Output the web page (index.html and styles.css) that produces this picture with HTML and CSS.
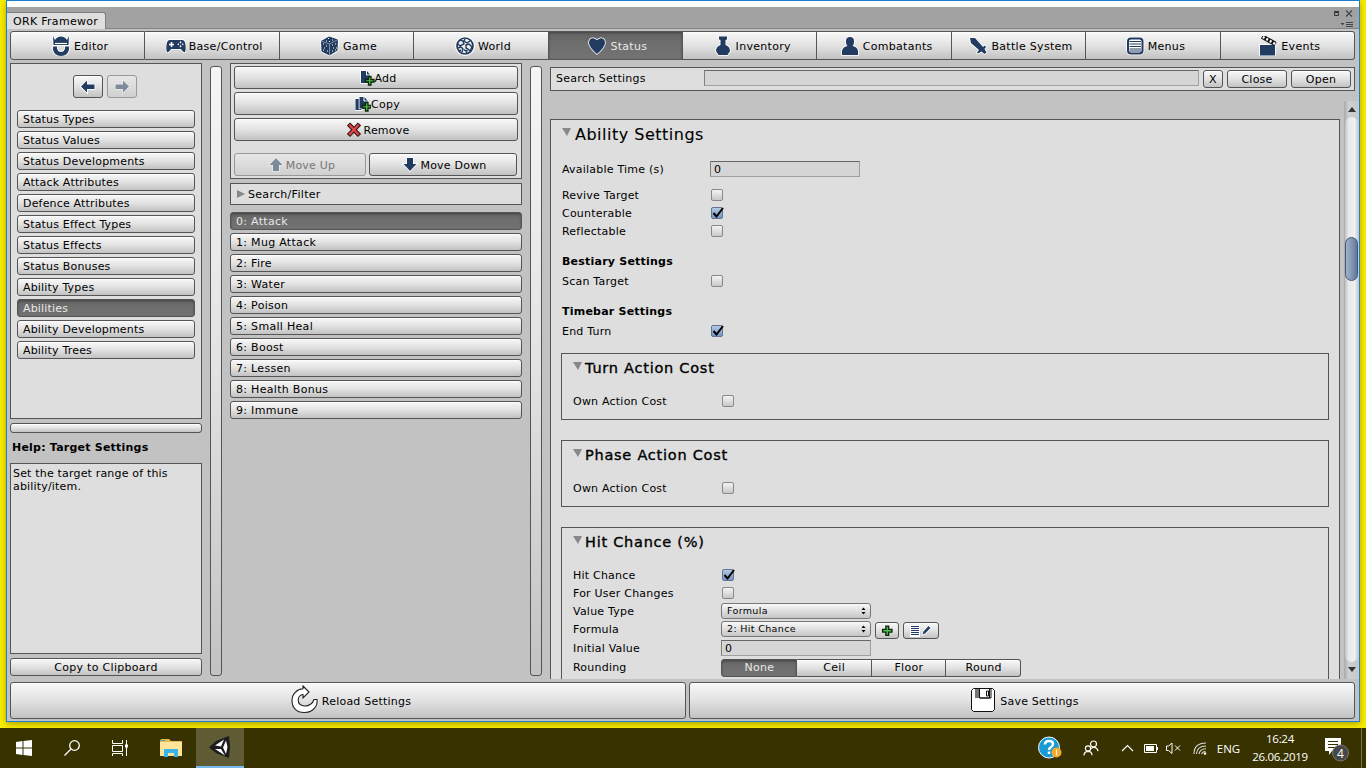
FILE: index.html
```html
<!DOCTYPE html>
<html lang="en">
  <head>
    <meta charset="utf-8">
    <title>ORK Framework</title>
    <link rel="stylesheet" href="styles.css">
  </head>
  <body>
    <div class="window">
      <div class="title-strip"></div>
      <div class="tab-bar">
        <div class="tab">ORK Framewor</div>
        <svg class="window-controls" width="24" height="21" viewBox="0 0 24 21">
          <path d="M4.500 5.500h4v3h-4z M4 4.500h5" fill="none" stroke="#333"/>
          <path d="M16 3.500l6 6M22 3.500l-6 6" stroke="#444" stroke-width="1.100"/>
          <path d="M10.500 16h4l-2 2.500z" fill="#444"/>
          <path d="M16 15.500h7M16 17.500h7M16 19.500h7" stroke="#444"/>
        </svg>
      </div>
      <div class="toolbar">
        <button><svg class="icon" viewBox="0 0 20 20"><path class="halo" d="M2 0l2 4q2-3.500 6-3.500T16 4l2-4-.5 9h-15zM2 10.500h4v2q1 3.500 4 3.500t4-3.500v-2h4v3q-1 6-8 6.500-7-.5-8-6.500z"/><path d="M4 7.500h12" stroke="#fff" stroke-width="1.200"/></svg>Editor</button>
        <button><svg class="icon" viewBox="0 0 20 20"><path class="halo" d="M4 4h12q3 0 3.500 5t-.5 7q-2 1-4-3H5q-2 4-4 3-1-2-.5-7T4 4z"/><path d="M5.500 6v5M3 8.500h5" stroke="#fff" stroke-width="1.500"/><path d="M14.500 5l1 1.200-1 1.200-1-1.200zM14.500 9l1 1.200-1 1.200-1-1.200zM12.300 7.200l1 1-1 1-1-1zM16.700 7.200l1 1-1 1-1-1z" fill="#fff"/></svg>Base/Control</button>
        <button><svg class="icon" viewBox="0 0 20 20"><path class="halo" d="M9 .5l9 3-.5 11-8 5-8-4L1 5z"/><path d="M1 5l8.500 3L18 3.500M9.500 8v11" stroke="#9aa7ba" stroke-width=".8" fill="none"/><path d="M8 2.500h1M12 4h1M6 5h1M9 5.500h1M3 8h1M6 10h1M4 12h1M3 14h1M7 15h1M12 9h1M15 8h1M13 12h1M16 12h1M12 15h1M15 14h1" stroke="#fff"/></svg>Game</button>
        <button><svg class="icon" viewBox="0 0 20 20"><circle cx="10" cy="10" r="8.300" fill="#fff" stroke="#fff" stroke-width="3.200"/><circle cx="10" cy="10" r="8" fill="#eee" stroke="#213c60" stroke-width="1.700"/><path d="M5 4l3 1 1 3-4 2-2-2M3 12l3-1 2 2-1 3M10 3l-1 2 3 2 3-2M11 9l3-1 3 3-2 4-2-2-2-1zM9 14l3 1-1 2M4 15l2-1" fill="none" stroke="#213c60" stroke-width="1.400"/></svg>World</button>
        <button class="selected"><svg class="icon" viewBox="0 0 20 20"><path class="halo" d="M10 18Q2 11 2 7q0-5 4.500-4.700L10 4l3.500-1.700Q18 2 18 7q0 4-8 11z"/></svg>Status</button>
        <button><svg class="icon" viewBox="0 0 20 20"><path class="halo" d="M6 .5h8v3l-1.500.5V9q4.500 1.500 4.500 6l-2.500 4h-9L3 15q0-4.500 4.500-6V4L6 3.500z"/></svg>Inventory</button>
        <button><svg class="icon" viewBox="0 0 20 20"><path class="halo" d="M10 1q4 0 4 4T12.500 10q5 1 5.500 5v4H2v-4q.5-4 5.500-5Q6 9 6 5t4-4z"/></svg>Combatants</button>
        <button><svg class="icon" viewBox="0 0 20 20"><path class="halo" d="M2 2h5l8 9 2-1.500 1 1.500-1.500 2 2 3.500-2 1.500-3-2.500-3.500 2-1-1 2-2.500L3 7z"/></svg>Battle System</button>
        <button><svg class="icon" viewBox="0 0 20 20"><rect class="halo" x="2" y="1.500" width="16.500" height="17" rx="4"/><rect x="4" y="3.500" width="12.500" height="13" rx="2" fill="#fff"/><path d="M4.500 5.500h11.500M4.500 8h11.500M4.500 10.500h11.500M4.500 13h11.500M4.500 15h11.500" stroke="#213c60"/></svg>Menus</button>
        <button><svg class="icon" viewBox="0 0 20 20"><path class="halo" d="M2 9h15v10.500H2z"/><path d="M4 .5l13.500 7.500" stroke="#111" stroke-width="4.500"/><path d="M4.800 1l12.500 7" stroke="#fff" stroke-width="2.500" stroke-dasharray="2 2"/></svg>Events</button>
      </div>

      <div class="workspace">
        <div class="sidebar">
          <div class="box section-list">
            <div class="history">
              <button><svg class="small-icon" viewBox="0 0 16 16"><path class="halo" d="M1 7.500l6-6v4h7.500v4.500H7v3.500z"/></svg></button>
              <button class="faded"><svg class="small-icon" viewBox="0 0 16 16"><path class="halo" d="M15 7.500l-6-6v4H1.500v4.500H9v3.500z"/></svg></button>
            </div>
            <button class="item">Status Types</button>
            <button class="item">Status Values</button>
            <button class="item">Status Developments</button>
            <button class="item">Attack Attributes</button>
            <button class="item">Defence Attributes</button>
            <button class="item">Status Effect Types</button>
            <button class="item">Status Effects</button>
            <button class="item">Status Bonuses</button>
            <button class="item">Ability Types</button>
            <button class="item selected">Abilities</button>
            <button class="item">Ability Developments</button>
            <button class="item">Ability Trees</button>
          </div>
          <button class="divider"></button>
          <div class="help-title">Help: Target Settings</div>
          <div class="box help-text">Set the target range of this ability/item.</div>
          <button class="copy-button">Copy to Clipboard</button>
        </div>

        <div class="splitter"></div>

        <div class="entries">
          <div class="box entry-actions">
            <button><svg class="small-icon" viewBox="0 0 16 16"><path class="halo" d="M2 1h6l3 3.500V13H2z"/><path d="M7.500 1v4H11" stroke="#fff" fill="none"/><path class="plus" d="M9.500 6.500h2.500v3h3V12h-3v3H9.500v-3h-3V9.500h3z"/></svg>Add</button>
            <button><svg class="small-icon" viewBox="0 0 16 16"><path class="halo" d="M.5 3h6v11h-6z"/><path class="halo" d="M4.500 1h5l3 3.500V12.500h-8z"/><path d="M9 1v4h3.500" stroke="#fff" fill="none"/><path class="plus" d="M10.500 6.500H13v3h3V12h-3v3h-2.500v-3h-3V9.500h3z"/></svg>Copy</button>
            <button><svg class="small-icon remove-icon" viewBox="0 0 16 16"><path d="M4 3.500l8 8.500M12 3.500L4 12" stroke="#281010" stroke-width="4.400" stroke-linecap="square"/><path d="M4 3.500l8 8.500M12 3.500L4 12" stroke="#e04444" stroke-width="2.300" stroke-linecap="square"/></svg>Remove</button>
            <div class="move-buttons">
              <button class="faded"><svg class="small-icon" viewBox="0 0 16 16"><path class="halo" d="M8 1l6.500 7H11v6H5V8H1.500z"/></svg>Move Up</button>
              <button><svg class="small-icon" viewBox="0 0 16 16"><path class="halo" d="M8 14l6.500-7H11V1H5v6H1.500z"/></svg>Move Down</button>
            </div>
          </div>
          <div class="box filter"><span class="arrow-right"></span>Search/Filter</div>
          <button class="item selected">0: Attack</button>
          <button class="item">1: Mug Attack</button>
          <button class="item">2: Fire</button>
          <button class="item">3: Water</button>
          <button class="item">4: Poison</button>
          <button class="item">5: Small Heal</button>
          <button class="item">6: Boost</button>
          <button class="item">7: Lessen</button>
          <button class="item">8: Health Bonus</button>
          <button class="item">9: Immune</button>
        </div>

        <div class="splitter"></div>

        <div class="details">
          <div class="box search-bar">
            <span class="search-label">Search Settings</span>
            <div class="field search-field"></div>
            <button class="clear">X</button>
            <button>Close</button>
            <button>Open</button>
          </div>
          <div class="scroll-area">
            <div class="scroll-view">
              <div class="box settings">
                <div class="heading heading-large"><span class="arrow-down"></span>Ability Settings</div>
                <div class="row first"><label>Available Time (s)</label><div class="field">0</div></div>
                <div class="row spaced"><label>Revive Target</label><span class="check"></span></div>
                <div class="row"><label>Counterable</label><span class="check on"><svg viewBox="0 0 14 14"><path d="M3.500 7l3 3.500L13 2"/></svg></span></div>
                <div class="row"><label>Reflectable</label><span class="check"></span></div>
                <div class="subtitle">Bestiary Settings</div>
                <div class="row"><label>Scan Target</label><span class="check"></span></div>
                <div class="subtitle">Timebar Settings</div>
                <div class="row"><label>End Turn</label><span class="check on"><svg viewBox="0 0 14 14"><path d="M3.500 7l3 3.500L13 2"/></svg></span></div>

                <div class="box group">
                  <div class="heading"><span class="arrow-down"></span>Turn Action Cost</div>
                  <div class="row"><label>Own Action Cost</label><span class="check"></span></div>
                </div>
                <div class="box group">
                  <div class="heading"><span class="arrow-down"></span>Phase Action Cost</div>
                  <div class="row"><label>Own Action Cost</label><span class="check"></span></div>
                </div>
                <div class="box group">
                  <div class="heading"><span class="arrow-down"></span>Hit Chance (%)</div>
                  <div class="row"><label>Hit Chance</label><span class="check on"><svg viewBox="0 0 14 14"><path d="M3.500 7l3 3.500L13 2"/></svg></span></div>
                  <div class="row"><label>For User Changes</label><span class="check"></span></div>
                  <div class="row"><label>Value Type</label><div class="select">Formula<svg viewBox="0 0 5 8"><path d="M.5 3l2-2.500 2 2.500zM.5 5h4l-2 2.500z"/></svg></div></div>
                  <div class="row"><label>Formula</label><div class="select">2: Hit Chance<svg viewBox="0 0 5 8"><path d="M.5 3l2-2.500 2 2.500zM.5 5h4l-2 2.500z"/></svg></div>
                    <button class="add-formula"><svg width="12" height="12" viewBox="5 5.500 11 11"><path class="plus" d="M9.500 6.500H12v3h3V12h-3v3H9.500v-3h-3V9.500h3z"/></svg></button>
                    <button class="edit-formula"><svg width="22" height="12" viewBox="0 0 22 12"><path d="M0 0h10v12H0z" fill="#fff"/><path d="M1 1.500h8M1 3.500h8M1 5.500h8M1 7.500h8M1 9.500h8" stroke="#213c60"/><path class="halo" d="M12.500 9.500l1-3L18.500 1l2 2-5.500 5.500z"/></svg></button>
                  </div>
                  <div class="row tall"><label>Initial Value</label><div class="field">0</div></div>
                  <div class="row tall"><label>Rounding</label>
                    <div class="segments"><button class="selected">None</button><button>Ceil</button><button>Floor</button><button>Round</button></div>
                  </div>
                </div>
              </div>
            </div>
            <div class="scrollbar">
              <span class="scroll-up"></span>
              <div class="track"><div class="thumb"></div></div>
              <span class="scroll-down"></span>
            </div>
          </div>
        </div>
      </div>

      <div class="footer">
        <button class="reload"><svg width="27" height="29" viewBox="0 0 27 29"><path d="M12 1l6 6-6 6V9.500C6 10 5 20 13 21c5 .5 9-3 10-6.500h3C27 20 23 27 14 27.500 5 28 1 22 1 15.500 1 9 6 4 12 3.800z" fill="#fff" stroke="#222" stroke-width="1.100"/></svg>Reload Settings</button>
        <button class="save"><svg width="24" height="24" viewBox="0 0 24 24"><path d="M2.500.5h19l2 2v19l-2 2h-19l-2-2v-19z" fill="#fff" stroke="#111"/><path d="M4 1h4v9H4z" fill="#777"/><path d="M8.500 1v9h10V1" fill="#fff" stroke="#111"/><path d="M20 1v9h-11M15.500 3h2v5h-2z" fill="none" stroke="#111"/></svg>Save Settings</button>
      </div>
    </div>

    <div class="taskbar">
      <span class="task"><svg width="16" height="16" viewBox="0 0 16 16" fill="#fff"><path d="M0 2l6.500-1v6.500H0zM7.500.9L16 0v7.500H7.500zM0 8.500h6.500V15L0 14zM7.500 8.500H16V16l-8.500-1z"/></svg></span>
      <span class="task"><svg width="16" height="16" viewBox="0 0 16 16" fill="none" stroke="#fff" stroke-width="1.300"><circle cx="10.500" cy="5.500" r="4.800"/><path d="M7 9l-6.500 6.500"/></svg></span>
      <span class="task"><svg width="17" height="16" viewBox="0 0 17 16" fill="none" stroke="#fff"><path d="M.5 0v3.500h10V0M.5 5.500h10v6H.5zM.5 16v-2.500h10V16M14.500 0v16"/><path d="M13 4.500h3v3h-3z" fill="#fff" stroke="none"/></svg></span>
      <span class="task folder"><svg width="22" height="20" viewBox="0 0 22 20"><path d="M0 3q0-2 2-2h7l2 2h11v15H0z" fill="#e6b94e"/><path d="M0 4h22v14H0z" fill="#ffe59a"/><path d="M1 2h4v1H1z" fill="#3aa9df"/><path d="M4 11h14v8h-4v-4H8v4H4z" fill="#3ab4ea"/></svg></span>
      <span class="task active"><svg width="24" height="24" viewBox="0 0 24 24"><path d="M1 12.500L8 6 21 1l1 11-1 11-13-5z" fill="#1c1c1c"/><path d="M7 10.500l9-6-3 7zM7 14h6l4 6.500zM18 5.500l1.500 6.500L18 19l-3-6.500z" fill="#fff"/></svg></span>

      <div class="tray">
        <span class="help"><svg width="25" height="24" viewBox="0 0 25 24"><circle cx="11" cy="11.500" r="10.500" fill="#169bd7" stroke="#fff"/><circle cx="18.500" cy="16.500" r="5" fill="#f7a825"/><path d="M18.500 13.500v6" stroke="#fff" stroke-width="1.200"/><path d="M7 8.500q0-3.500 4-3.500t4 3q0 2-2.500 3.500-1.500 1-1.500 2.500M11 15.500v2.500" fill="none" stroke="#fff" stroke-width="2.500"/></svg></span>
        <span class="people"><svg width="16" height="16" viewBox="0 0 16 16" fill="none" stroke="#fff" stroke-width="1.200"><circle cx="10.500" cy="4" r="3"/><circle cx="5" cy="8.500" r="2.600"/><path d="M1 15.500q0-4 4-4.200 4 0 4 4M8 8.500l2.500-1.300q4 .5 4.500 4"/></svg></span>
        <span class="chevron"><svg width="13" height="8" viewBox="0 0 13 8"><path d="M1 7l5.500-5.500L12 7" fill="none" stroke="#fff" stroke-width="1.200"/></svg></span>
        <span class="battery"><svg width="15" height="9" viewBox="0 0 15 9"><path d="M.5.500h12v8H.5zM13.500 3v3" fill="none" stroke="#fff"/><path d="M2 2h8v5H2z" fill="#fff"/></svg></span>
        <span class="speaker"><svg width="16" height="12" viewBox="0 0 16 12" fill="none" stroke="#fff"><path d="M.5 4h2l3.500-3v10.500L2.500 8.500h-2zM9 3.500l5 5M14 3.500l-5 5"/></svg></span>
        <span class="wifi"><svg width="14" height="14" viewBox="0 0 14 14" fill="none" stroke="#ddd" stroke-width="1.100"><path d="M1 13Q1 2 13 2M3.500 13Q4 5 13 5M6 13q1-5 7-5.200M8.500 13q1-2.500 4-2.800"/><circle cx="12" cy="12.500" r="1.300" fill="#fff" stroke="none"/></svg></span>
        <span class="lang">ENG</span>
        <span class="clock">16:24<br>26.06.2019</span>
        <span class="notes"><svg width="26" height="26" viewBox="0 0 26 26"><path d="M1 1h16v13H8l-3 4v-4H1z" fill="#fff"/><path d="M4 4.500h10M4 7.500h10M4 10.500h7" stroke="#373200"/><circle cx="16.500" cy="16" r="8" fill="#474747" stroke="#777"/><text x="13" y="20.500" font-size="12" fill="#fff">4</text></svg></span>
        <span class="show-desktop"></span>
      </div>
    </div>
  </body>
</html>
```
FILE: styles.css
```css
* {
  box-sizing: border-box;
}

body {
  margin: 0;
  width: 1366px;
  height: 768px;
  overflow: hidden;
  background-color: #f8ec00;
  color: #000;
  font-family: "DejaVu Sans", sans-serif;
  font-size: 11px;
  letter-spacing: 0.22px;
  display: flex;
  flex-direction: column;
}

svg {
  display: block;
  flex: none;
}

.window {
  width: 1354px;
  height: 722px;
  margin: 0 6px 6px;
  border: 1px solid #1d7fd0;
  background-color: #c2c2c2;
  box-shadow: 0 2px 6px rgba(80, 70, 0, 0.45);
  display: flex;
  flex-direction: column;
}

.title-strip {
  height: 6px;
  background-color: #fff;
}

.tab-bar {
  height: 22px;
  padding-right: 5px;
  background-color: #a2a2a2;
  border-bottom: 1px solid #828282;
  display: flex;
  justify-content: space-between;
}

.tab {
  width: 99px;
  height: 17px;
  margin-top: 5px;
  padding: 2px 0 0 6px;
  line-height: 13px;
  letter-spacing: 0.3px;
  background-color: #dedede;
  border: 1px solid #808080;
  border-width: 1px 1px 0 0;
  border-radius: 0 3px 0 0;
}

button {
  margin: 0;
  padding: 0;
  border: 1px solid #555;
  border-radius: 3px;
  background: linear-gradient(#f8f8f8, #e2e2e2 50%, #c2c2c2);
  box-shadow: inset 0 1px #fdfdfd;
  color: #000;
  font: inherit;
  letter-spacing: inherit;
  display: flex;
  align-items: center;
  justify-content: center;
}

button.selected {
  background: linear-gradient(#606060, #6d6d6d 35%, #737373);
  box-shadow: inset 0 1px 2px #444;
  color: #e8e8e8;
}

button.faded {
  border-color: #999;
  background: linear-gradient(#e6e6e6, #d0d0d0);
  box-shadow: none;
  color: #777;
}

.faded svg {
  opacity: 0.5;
}

.toolbar {
  height: 29px;
  margin: 2px 4px 0 3px;
  display: flex;
}

.toolbar button {
  flex: 1;
  gap: 3px;
  padding: 1px 0 0 4px;
  letter-spacing: 0.3px;
  border-radius: 0;
  border-left-width: 0;
}

.toolbar button:first-child {
  flex-basis: 1px;
  border-left-width: 1px;
  border-radius: 3px 0 0 3px;
}

.toolbar button:last-child {
  border-radius: 0 3px 3px 0;
}

.icon {
  width: 20px;
  height: 20px;
  margin-top: -1px;
}

.small-icon {
  width: 16px;
  height: 16px;
}

.halo {
  fill: #213c60;
  stroke: #fff;
  stroke-width: 1.6px;
  paint-order: stroke;
}

.plus {
  fill: #4fc34a;
  stroke: #0d240d;
  stroke-width: 1.3px;
}

.box {
  border: 1px solid #555;
  background-color: #dedede;
}

.workspace {
  height: 619px;
  padding-left: 3px;
  display: flex;
}

.sidebar {
  width: 192px;
  padding-top: 3px;
}

.section-list {
  height: 356px;
  padding: 11px 6px 0;
}

.history {
  display: flex;
  justify-content: center;
  gap: 4px;
  padding-right: 2px;
  margin-bottom: 12px;
}

.history button {
  width: 30px;
  height: 23px;
}

.item {
  width: 100%;
  height: 18px;
  margin-bottom: 3px;
  padding-left: 5px;
  justify-content: flex-start;
}

.section-list .item {
  letter-spacing: 0.18px;
}

.divider {
  width: 100%;
  height: 10px;
  margin-top: 4px;
}

.help-title {
  height: 30px;
  padding: 8px 0 0 2px;
  font-weight: bold;
}

.help-text {
  height: 191px;
  padding: 3px 2px;
  line-height: 13px;
  letter-spacing: 0.18px;
}

.copy-button {
  width: 100%;
  height: 18px;
  margin-top: 4px;
  letter-spacing: 0.3px;
}

.splitter {
  width: 12px;
  height: 610px;
  margin: 6px 8px 0;
  border: 1px solid #555;
  border-radius: 3px;
  background: linear-gradient(#f5f5f5, #e2e2e2 50%, #c2c2c2);
}

.entries {
  width: 292px;
  padding-top: 3px;
}

.entries .item {
  letter-spacing: 0.3px;
}

.entry-actions {
  height: 116px;
  padding: 2px 3px;
  display: flex;
  flex-direction: column;
  gap: 3px;
}

.entry-actions button {
  height: 23px;
  padding: 1px 0 0 3px;
}

.entry-actions svg {
  margin-top: -1px;
}

.move-buttons {
  display: flex;
  gap: 3px;
  margin-top: 9px;
}

.move-buttons button {
  width: 148px;
  gap: 2px;
}

.move-buttons button:first-child {
  width: 132px;
}

.remove-icon {
  margin-right: 2px;
}

.filter {
  height: 22px;
  margin: 4px 0 7px;
  padding-left: 6px;
  letter-spacing: 0.3px;
  display: flex;
  align-items: center;
  gap: 3px;
}

.arrow-right {
  border: 4.500px solid transparent;
  border-left: 8px solid #888;
  border-right: 0;
}

.details {
  width: 809px;
}

.search-bar {
  width: 805px;
  height: 24px;
  margin-top: 7px;
  padding: 2px 3px 0 5px;
  display: flex;
  gap: 4px;
}

.search-label {
  width: 144px;
  line-height: 17px;
}

.search-bar button {
  width: 60px;
  height: 18px;
}

.search-bar .clear {
  width: 20px;
}

.field {
  width: 150px;
  height: 16px;
  padding-left: 3px;
  line-height: 15px;
  background-color: #d5d5d5;
  border: 1px solid #a0a0a0;
  border-top-color: #666;
  border-left-color: #808080;
}

.search-field {
  width: 495px;
}

.scroll-area {
  height: 578px;
  margin-top: 10px;
  display: flex;
  gap: 4px;
}

.scroll-view {
  width: 790px;
  padding-top: 18px;
  overflow: hidden;
}

.settings {
  height: 600px;
  padding: 0 10px;
}

.heading {
  height: 28px;
  margin-bottom: 10px;
  font-size: 14.500px;
  letter-spacing: 0.75px;
  -webkit-text-stroke: 0.35px #000;
  display: flex;
  align-items: center;
  gap: 3px;
}

.heading-large {
  font-size: 16px;
  letter-spacing: 0.5px;
  padding-left: 1px;
  -webkit-text-stroke-width: 0.1px;
}

.arrow-down {
  margin-bottom: 4px;
  border: 4.800px solid transparent;
  border-top: 8px solid #888;
  border-bottom: 0;
}

.heading .arrow-down {
  width: 9px;
  border-left-width: 5px;
  border-right-width: 4px;
}

.heading-large {
  gap: 4px;
}

.row {
  height: 18px;
  display: flex;
  align-items: center;
}

.settings > .row {
  padding-left: 1px;
}

.spaced {
  margin-top: 8px;
}

.settings > .first {
  margin-top: 12px;
}

.row label {
  width: 148px;
}

.check {
  width: 12px;
  height: 12px;
  margin-left: 1px;
  border: 1px solid #888;
  border-radius: 2px;
  background: linear-gradient(#f4f4f4, #c8c8c8);
}

.check.on {
  border-color: #65758f;
  background: linear-gradient(#b2c8e3, #7595c4);
}

.check svg {
  width: 14px;
  height: 14px;
  margin: -2px;
}

.check path {
  fill: none;
  stroke: #000;
  stroke-width: 2px;
}

.subtitle {
  height: 18px;
  margin: 12px 0 2px 1px;
  line-height: 20px;
  font-weight: bold;
}

.group {
  height: 67px;
  margin: 13px 0 20px;
  padding-left: 11px;
}

.group + .group {
  margin-top: 0;
}

.group:last-child {
  height: 200px;
}

.select {
  width: 150px;
  height: 16px;
  margin-bottom: 1px;
  padding: 0 4px 0 5px;
  border: 1px solid #777;
  border-radius: 3px;
  background: linear-gradient(#f8f8f8, #c6c6c6);
  font-size: 9.500px;
  letter-spacing: 0.35px;
  display: flex;
  align-items: center;
  justify-content: space-between;
}

.select svg {
  width: 5px;
  height: 8px;
}

.add-formula {
  width: 24px;
  height: 17px;
  margin: 3px 4px 0;
}

.edit-formula {
  width: 36px;
  height: 17px;
  margin-top: 3px;
}

.tall {
  height: 19px;
}

.tall label {
  padding-top: 1px;
}

.segments {
  width: 300px;
  height: 18px;
  margin-top: 2px;
  letter-spacing: 0.3px;
  display: flex;
}

.segments button {
  flex: 1;
  padding: 0 0 0 1px;
  border-left-width: 0;
  border-radius: 0;
}

.segments button:first-child {
  border-left-width: 1px;
  border-radius: 3px 0 0 3px;
}

.segments button:last-child {
  border-radius: 0 3px 3px 0;
}

.scrollbar {
  width: 15px;
  background: linear-gradient(90deg, #aaa, #cfcfcf 30%, #c8c8c8);
  display: flex;
  flex-direction: column;
  align-items: center;
}

.scroll-up {
  margin: 6px 0 5px;
  border: 4px solid transparent;
  border-bottom: 5px solid #333;
  border-top: 0;
}

.scroll-down {
  margin: 5px 0 7px;
  border: 4px solid transparent;
  border-top: 5px solid #333;
  border-bottom: 0;
}

.track {
  flex: 1;
  width: 13px;
  padding-top: 120px;
  border-radius: 7px;
  background: linear-gradient(90deg, #c0c0c0, #e8e8e8 25%, #f0f0f0 75%, #ccc);
}

.thumb {
  height: 44px;
  border: 1px solid #435474;
  border-radius: 7px;
  background: linear-gradient(90deg, #a3b1c6, #7f93b2 55%, #607799);
}

.footer {
  margin: 3px 4px 0 3px;
  display: flex;
  gap: 3px;
}

.footer button {
  height: 37px;
  gap: 5px;
  padding: 1px 0 0 6px;
}

.footer .reload {
  width: 676px;
  gap: 4px;
}

.reload svg {
  margin-top: -4px;
}

.save svg {
  margin-top: -2px;
}

.footer .save {
  width: 666px;
}

.taskbar {
  height: 40px;
  background-color: #373200;
  color: #fff;
  font-family: "Open Sans", "Noto Sans", sans-serif;
  font-size: 12px;
  letter-spacing: 0;
  display: flex;
}

.task {
  width: 48px;
  display: flex;
  align-items: center;
  justify-content: center;
}

.task.folder {
  width: 52px;
  padding-left: 2px;
}

.task.active {
  background-color: #5f5b35;
  border-bottom: 2px solid #76b9ed;
}

.tray {
  margin-left: auto;
  display: flex;
}

.tray > span {
  display: flex;
  align-items: center;
  justify-content: center;
}

.tray .help { width: 40px; padding-left: 1px; }
.tray .people { width: 42px; }
.tray .chevron { width: 30px; }
.tray .battery { width: 18px; }
.tray .speaker { width: 28px; }
.tray .wifi { width: 24px; }
.tray .lang { width: 33px; font-size: 11.500px; }

.tray .clock {
  width: 70px;
  line-height: 18px;
  font-size: 11.500px;
  letter-spacing: -0.3px;
  text-align: center;
}

.tray .notes {
  width: 46px;
  padding: 4px 2px 0 0;
}

.tray .show-desktop {
  width: 5px;
  border-left: 1px solid #77734f;
}
```
